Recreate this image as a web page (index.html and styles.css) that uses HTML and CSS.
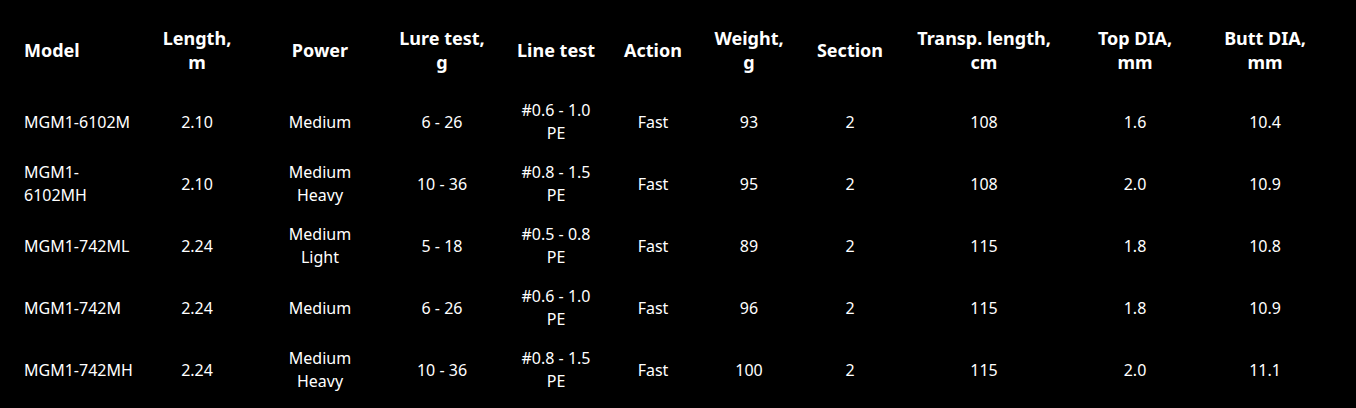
FILE: index.html
```html
<!DOCTYPE html>
<html lang="en">
<head>
<meta charset="utf-8">
<title>Specs</title>
<link rel="stylesheet" href="styles.css">
</head>
<body>
<table class="specs">
  <colgroup>
    <col class="c-model"><col class="c-len"><col class="c-power"><col class="c-lure"><col class="c-line"><col class="c-action"><col class="c-weight"><col class="c-section"><col class="c-transp"><col class="c-top"><col class="c-butt">
  </colgroup>
  <thead>
    <tr>
      <th class="first">Model</th>
      <th>Length,<br>m</th>
      <th>Power</th>
      <th>Lure test,<br>g</th>
      <th>Line test</th>
      <th>Action</th>
      <th>Weight,<br>g</th>
      <th>Section</th>
      <th>Transp. length,<br>cm</th>
      <th>Top DIA,<br>mm</th>
      <th>Butt DIA,<br>mm</th>
    </tr>
  </thead>
  <tbody>
    <tr>
      <td class="first">MGM1-6102M</td><td>2.10</td><td>Medium</td><td>6 - 26</td><td>#0.6 - 1.0<br>PE</td><td>Fast</td><td>93</td><td>2</td><td>108</td><td>1.6</td><td>10.4</td>
    </tr>
    <tr>
      <td class="first">MGM1-<br>6102MH</td><td>2.10</td><td>Medium<br>Heavy</td><td>10 - 36</td><td>#0.8 - 1.5<br>PE</td><td>Fast</td><td>95</td><td>2</td><td>108</td><td>2.0</td><td>10.9</td>
    </tr>
    <tr>
      <td class="first">MGM1-742ML</td><td>2.24</td><td>Medium<br>Light</td><td>5 - 18</td><td>#0.5 - 0.8<br>PE</td><td>Fast</td><td>89</td><td>2</td><td>115</td><td>1.8</td><td>10.8</td>
    </tr>
    <tr>
      <td class="first">MGM1-742M</td><td>2.24</td><td>Medium</td><td>6 - 26</td><td>#0.6 - 1.0<br>PE</td><td>Fast</td><td>96</td><td>2</td><td>115</td><td>1.8</td><td>10.9</td>
    </tr>
    <tr>
      <td class="first">MGM1-742MH</td><td>2.24</td><td>Medium<br>Heavy</td><td>10 - 36</td><td>#0.8 - 1.5<br>PE</td><td>Fast</td><td>100</td><td>2</td><td>115</td><td>2.0</td><td>11.1</td>
    </tr>
  </tbody>
</table>
</body>
</html>
```
FILE: styles.css
```css
html, body {
  background: #000;
}
body {
  margin: 8px;
  color: #fff;
  font-family: "Noto Sans", "Open Sans", sans-serif;
}
.specs {
  border-collapse: collapse;
  table-layout: fixed;
  width: 1322px;
}
.c-model { width: 128px; }
.c-len { width: 122px; }
.c-power { width: 124px; }
.c-lure { width: 120px; }
.c-line { width: 108px; }
.c-action { width: 86px; }
.c-weight { width: 106px; }
.c-section { width: 96px; }
.c-transp { width: 172px; }
.c-top { width: 130px; }
.c-butt { width: 130px; }

.specs th, .specs td {
  padding: 0 4px;
  text-align: center;
  vertical-align: middle;
  white-space: nowrap;
}
.specs th {
  height: 83px;
  font-size: 18px;
  font-weight: 700;
  line-height: 24px;
}
.specs td {
  height: 62px;
  font-size: 16px;
  font-weight: 400;
  line-height: 23px;
}
.specs .first {
  text-align: left;
  padding-left: 16px;
}
```
